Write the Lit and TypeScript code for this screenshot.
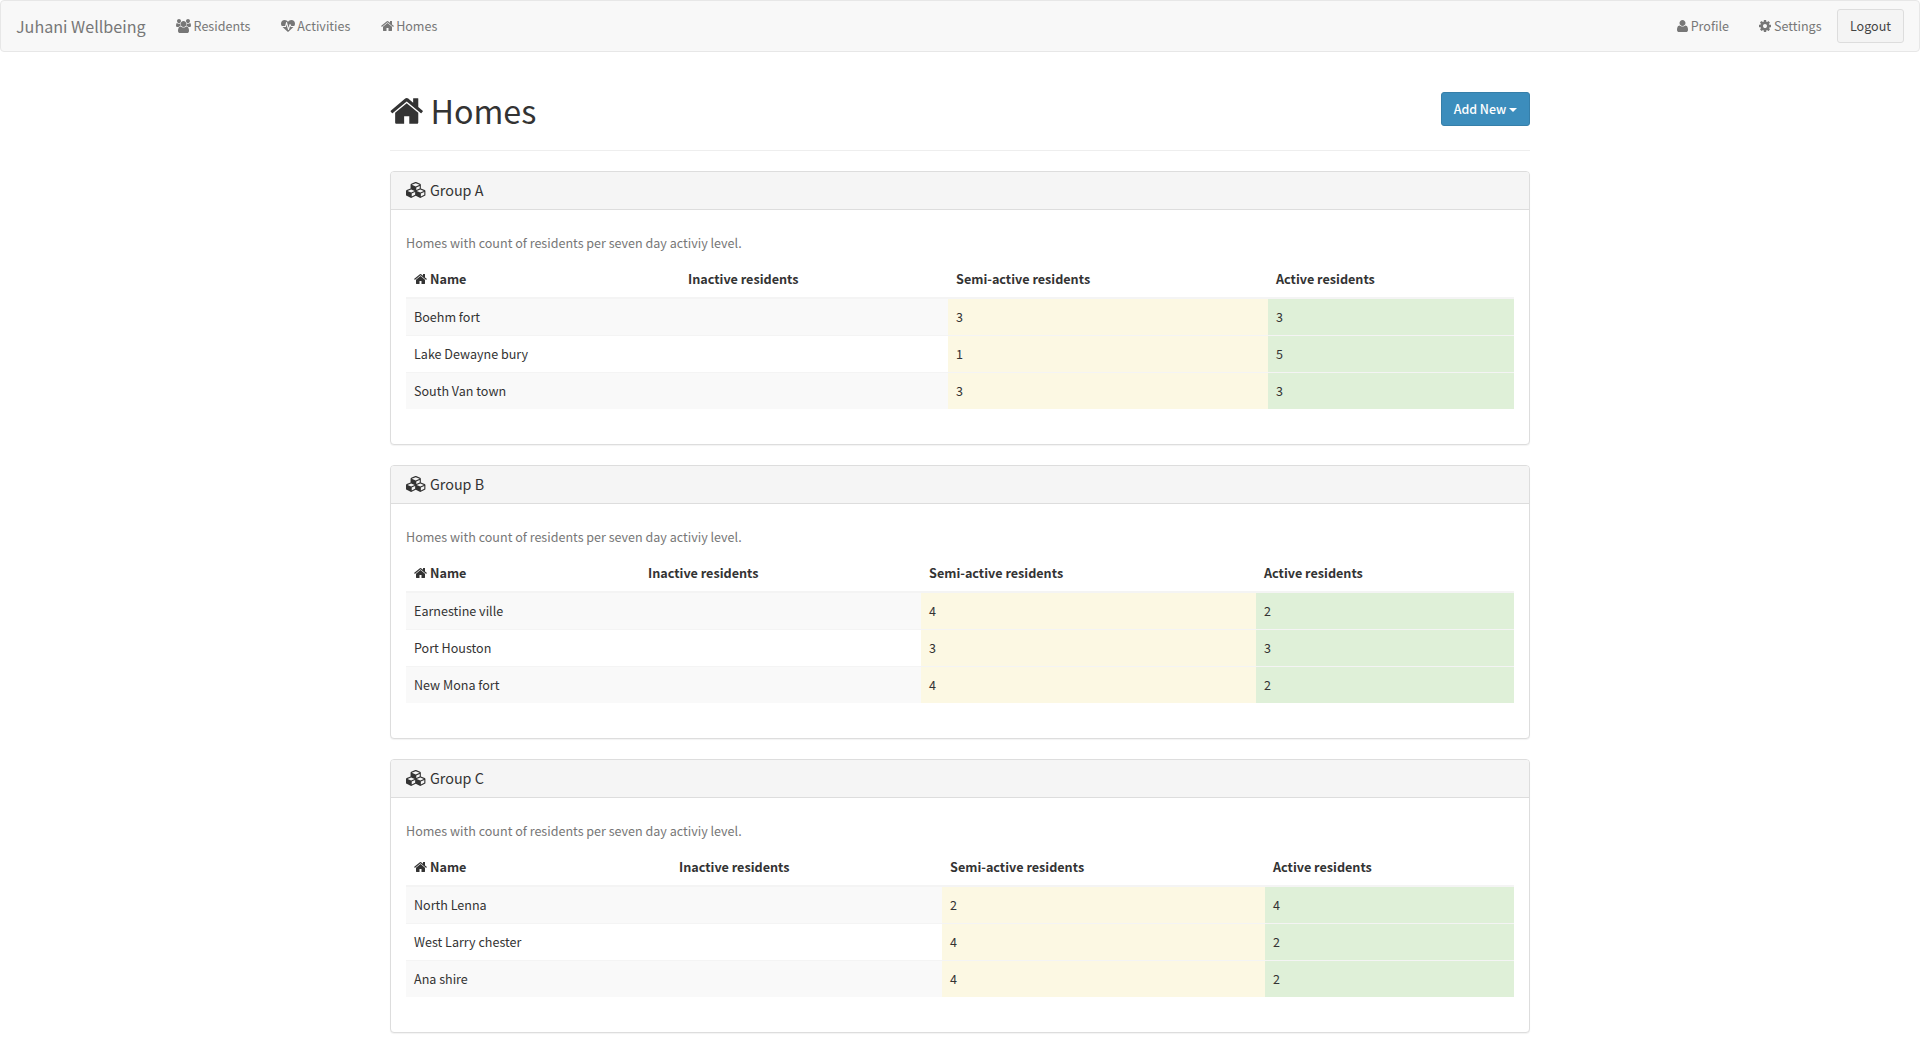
import { LitElement, html, css, svg } from "lit";
import { customElement, property } from "lit/decorators.js";

/* Glyph outlines on a 1792-unit em, y axis pointing up, baseline at 0. */
const GLYPHS: Record<string, { w: number; d: string }> = {
  home: {
    w: 1664,
    d: "M1408 544v-480q0 -26 -19 -45t-45 -19h-384v384h-256v-384h-384q-26 0 -45 19t-19 45v480q0 1 0.5 3t0.5 3l575 474l575 -474q1 -2 1 -6zM1631 613l-62 -74q-8 -9 -21 -11h-3q-13 0 -21 7l-692 577l-692 -577q-12 -8 -24 -7q-13 2 -21 11l-62 74q-8 10 -7 23.5t11 21.5l719 599q32 26 76 26t76 -26l244 -204v195q0 14 9 23t23 9h192q14 0 23 -9t9 -23v-408l219 -182q10 -8 11 -21.5t-7 -23.5z",
  },
  user: {
    w: 1408,
    d: "M1408 131q0 -120 -73 -189.5t-194 -69.5h-874q-121 0 -194 69.5t-73 189.5q0 53 3.5 103.5t14 109t26.5 108.5t43 97.5t62 81t85.5 53.5t111.5 20q9 0 42 -21.5t74.5 -48t108 -48t133.5 -21.5t133.5 21.5t108 48t74.5 48t42 21.5q61 0 111.5 -20t85.5 -53.5t62 -81t43 -97.5t26.5 -108.5t14 -109t3.5 -103.5zM1088 1024q0 -159 -112.5 -271.5t-271.5 -112.5t-271.5 112.5t-112.5 271.5t112.5 271.5t271.5 112.5t271.5 -112.5t112.5 -271.5z",
  },
  users: {
    w: 1920,
    d: "M593 640q-162 -5 -265 -128h-134q-82 0 -138 40.5t-56 118.5q0 353 124 353q6 0 43.5 -21t97.5 -42.5t119 -21.5q67 0 133 23q-5 -37 -5 -66q0 -139 81 -256zM1664 3q0 -120 -73 -189.5t-194 -69.5h-874q-121 0 -194 69.5t-73 189.5q0 53 3.5 103.5t14 109t26.5 108.5t43 97.5t62 81t85.5 53.5t111.5 20q10 0 43 -21.5t73 -48t107 -48t135 -21.5t135 21.5t107 48t73 48t43 21.5q61 0 111.5 -20t85.5 -53.5t62 -81t43 -97.5t26.5 -108.5t14 -109t3.5 -103.5zM640 1280q0 -106 -75 -181t-181 -75t-181 75t-75 181t75 181t181 75t181 -75t75 -181zM1344 896q0 -159 -112.5 -271.5t-271.5 -112.5t-271.5 112.5t-112.5 271.5t112.5 271.5t271.5 112.5t271.5 -112.5t112.5 -271.5zM1920 671q0 -78 -56 -118.5t-138 -40.5h-134q-103 123 -265 128q81 117 81 256q0 29 -5 66q66 -23 133 -23q59 0 119 21.5t97.5 42.5t43.5 21q124 0 124 -353zM1792 1280q0 -106 -75 -181t-181 -75t-181 75t-75 181t75 181t181 75t181 -75t75 -181z",
  },
  heartbeat: {
    w: 1792,
    d: "M1280 512h305q-5 -6 -10 -10.5t-9 -7.5l-3 -4l-623 -600q-18 -18 -44 -18t-44 18l-624 602q-5 2 -21 20h369q22 0 39.5 13.5t22.5 34.5l70 281l190 -667q6 -20 23 -33t39 -13q21 0 38 13t23 33l146 485l56 -112q18 -35 57 -35zM1792 940q0 -145 -103 -300h-369l-111 221q-8 17 -25.5 27t-36.5 8q-45 -5 -56 -46l-129 -430l-196 686q-6 20 -23.5 33t-39.5 13t-39 -13.5t-22 -34.5l-116 -464h-423q-103 155 -103 300q0 220 127 344t351 124q62 0 126.5 -21.5t120 -58t95.5 -68.5t76 -68q36 36 76 68t95.5 68.5t120 58t126.5 21.5q224 0 351 -124t127 -344z",
  },
  cog: {
    w: 1536,
    d: "M1024 640q0 106 -75 181t-181 75t-181 -75t-75 -181t75 -181t181 -75t181 75t75 181zM1536 749v-222q0 -12 -8 -23t-20 -13l-185 -28q-19 -54 -39 -91q35 -50 107 -138q10 -12 10 -25t-9 -23q-27 -37 -99 -108t-94 -71q-12 0 -26 9l-138 108q-44 -23 -91 -38q-16 -136 -29 -186q-7 -28 -36 -28h-222q-14 0 -24.5 8.5t-11.5 21.5l-28 184q-49 16 -90 37l-141 -107q-10 -9 -25 -9q-14 0 -25 11q-126 114 -165 168q-7 10 -7 23q0 12 8 23q15 21 51 66.5t54 70.5q-27 50 -41 99l-183 27q-13 2 -21 12.5t-8 23.5v222q0 12 8 23t19 13l186 28q14 46 39 92q-40 57 -107 138q-10 12 -10 24q0 10 9 23q26 36 98.5 107.5t94.5 71.5q13 0 26 -10l138 -107q44 23 91 38q16 136 29 186q7 28 36 28h222q14 0 24.5 -8.5t11.5 -21.5l28 -184q49 -16 90 -37l142 107q9 9 24 9q13 0 25 -10q129 -119 165 -170q7 -8 7 -22q0 -12 -8 -23q-15 -21 -51 -66.5t-54 -70.5q26 -50 41 -98l183 -28q13 -2 21 -12.5t8 -23.5z",
  },
  cubes: {
    w: 2304,
    d: "M640 -96l384 192v314l-384 -164v-342zM576 358l404 173l-404 173l-404 -173zM1664 -96l384 192v314l-384 -164v-342zM1600 358l404 173l-404 173l-404 -173zM1152 651l384 165v266l-384 -164v-267zM1088 1030l441 189l-441 189l-441 -189zM2176 512v-416q0 -36 -19 -67t-52 -47l-448 -224q-25 -14 -57 -14t-57 14l-448 224q-5 2 -7 4q-2 -2 -7 -4l-448 -224q-25 -14 -57 -14t-57 14l-448 224q-33 16 -52 47t-19 67v416q0 38 21.5 70t56.5 48l434 186v400q0 38 21.5 70t56.5 48l448 192q23 10 50 10t50 -10l448 -192q35 -16 56.5 -48t21.5 -70v-400l434 -186q36 -16 57 -48t21 -70z",
  },
};

const icon = (name: string, size: number) => {
  const g = GLYPHS[name];
  return html`<svg
    class="icon"
    width=${(g.w / 1792) * size}
    height=${size}
    viewBox="0 0 ${g.w} 1792"
    aria-hidden="true"
  >${svg`<path transform="translate(0 1536) scale(1 -1)" d=${g.d}></path>`}</svg>`;
};

const iconStyles = css`
  .icon {
    flex: none;
    display: block;
    fill: currentColor;
    overflow: visible;
  }
`;

interface Home {
  name: string;
  semi: number;
  active: number;
}

interface Group {
  name: string;
  columns: number[];
  homes: Home[];
}

const GROUPS: Group[] = [
  {
    name: "Group A",
    columns: [274, 268, 320, 246],
    homes: [
      { name: "Boehm fort", semi: 3, active: 3 },
      { name: "Lake Dewayne bury", semi: 1, active: 5 },
      { name: "South Van town", semi: 3, active: 3 },
    ],
  },
  {
    name: "Group B",
    columns: [234, 281, 335, 258],
    homes: [
      { name: "Earnestine ville", semi: 4, active: 2 },
      { name: "Port Houston", semi: 3, active: 3 },
      { name: "New Mona fort", semi: 4, active: 2 },
    ],
  },
  {
    name: "Group C",
    columns: [265, 271, 323, 249],
    homes: [
      { name: "North Lenna", semi: 2, active: 4 },
      { name: "West Larry chester", semi: 4, active: 2 },
      { name: "Ana shire", semi: 4, active: 2 },
    ],
  },
];

@customElement("home-group")
export class HomeGroup extends LitElement {
  @property({ attribute: false }) group!: Group;

  static styles = [
    iconStyles,
    css`
      :host {
        display: block;
        box-sizing: border-box;
        height: 274px;
        background: #fff;
        border: 1px solid #ddd;
        border-radius: 4px;
        box-shadow: 0 1px 1px rgba(0, 0, 0, 0.05);
      }
      .heading {
        display: flex;
        align-items: center;
        gap: 3.4px;
        box-sizing: border-box;
        height: 38px;
        padding: 0 15px 1px;
        background: #f5f5f5;
        border-bottom: 1px solid #ddd;
        border-radius: 3px 3px 0 0;
        font-size: 14.33px;
        line-height: 18px;
      }
      .body {
        padding: 23px 15px 0;
      }
      .note {
        margin: 0 0 8px;
        color: #777;
        line-height: 20px;
      }
      .table {
        width: 1108px;
        table-layout: fixed;
        border-spacing: 0;
      }
      .cell {
        padding: 8px;
        height: 20px;
        text-align: left;
        border-top: 1px solid #f4f4f4;
      }
      .head .cell {
        border-top: 0;
        border-bottom: 2px solid #f4f4f4;
        font-size: 12.64px;
        font-weight: 700;
      }
      .row:first-child .cell {
        border-top: 0;
      }
      .row:nth-child(odd) .cell {
        background: #f9f9f9;
      }
      .row .cell.semi {
        background: #fcf8e3;
      }
      .row .cell.active {
        background: #dff0d8;
      }
      .name {
        display: flex;
        align-items: center;
        gap: 3px;
      }
    `,
  ];

  render() {
    const { name, columns, homes } = this.group;
    return html`
      <div class="heading">${icon("cubes", 16)}<span>${name}</span></div>
      <div class="body">
        <p class="note">Homes with count of residents per seven day activiy level.</p>
        <table class="table">
          <colgroup>
            ${columns.map((w) => html`<col style="width:${w}px" />`)}
          </colgroup>
          <thead class="head">
            <tr>
              <th class="cell"><span class="name">${icon("home", 14)}<span>Name</span></span></th>
              <th class="cell">Inactive residents</th>
              <th class="cell">Semi-active residents</th>
              <th class="cell">Active residents</th>
            </tr>
          </thead>
          <tbody>
            ${homes.map(
              (h) => html`<tr class="row">
                <td class="cell">${h.name}</td>
                <td class="cell"></td>
                <td class="cell semi">${h.semi}</td>
                <td class="cell active">${h.active}</td>
              </tr>`
            )}
          </tbody>
        </table>
      </div>
    `;
  }
}

@customElement("app-root")
export class AppRoot extends LitElement {
  static styles = [
    iconStyles,
    css`
      :host {
        display: block;
        min-height: 1053px;
        background: #fff;
        color: #333;
        font-family: "Noto Sans CJK SC", "Source Sans Pro", sans-serif;
        font-size: 12.56px;
        line-height: 20px;
      }
      .navbar {
        box-sizing: border-box;
        display: flex;
        align-items: center;
        height: 52px;
        padding: 0 15px;
        background: #f8f8f8;
        border: 1px solid #e7e7e7;
        border-radius: 4px;
        color: #777;
      }
      .brand {
        margin-right: 15.4px;
        font-size: 16.12px;
      }
      .link {
        display: flex;
        align-items: center;
        gap: 2.6px;
        padding: 0 15px;
      }
      .links {
        display: flex;
        gap: 0.2px;
      }
      .links.end {
        gap: 0.4px;
        margin: 0 0.4px 0 auto;
      }
      .button {
        box-sizing: border-box;
        display: flex;
        align-items: center;
        justify-content: center;
        gap: 3px;
        height: 34px;
        margin: 0;
        padding: 0 12px;
        border: 1px solid #ddd;
        border-radius: 3px;
        background: #f4f4f4;
        color: #444;
        font: inherit;
        white-space: nowrap;
      }
      .button.primary {
        width: 89px;
        background: #3c8dbc;
        border-color: #367fa9;
        color: #fff;
        font-size: 12.4px;
        font-weight: 500;
      }
      .caret {
        margin-top: 2px;
        border-top: 4px solid;
        border-left: 4px solid transparent;
        border-right: 4px solid transparent;
      }
      .container {
        width: 1140px;
        margin: 0 auto;
      }
      .title {
        display: flex;
        justify-content: space-between;
        box-sizing: border-box;
        height: 99px;
        padding-top: 40px;
        border-bottom: 1px solid #eee;
      }
      .heading {
        display: flex;
        align-items: center;
        gap: 7px;
        height: 38px;
        margin: 0;
        font-size: 32.24px;
        font-weight: 400;
        line-height: 36px;
      }
      .heading-label {
        padding-bottom: 2px;
      }
      .groups {
        display: flex;
        flex-direction: column;
        gap: 20px;
        padding-top: 20px;
      }
    `,
  ];

  private link(name: string, label: string) {
    return html`<a class="link">${icon(name, 14)}<span>${label}</span></a>`;
  }

  render() {
    return html`
      <nav class="navbar">
        <span class="brand">Juhani Wellbeing</span>
        <div class="links">
          ${this.link("users", "Residents")}
          ${this.link("heartbeat", "Activities")}
          ${this.link("home", "Homes")}
        </div>
        <div class="links end">
          ${this.link("user", "Profile")}
          ${this.link("cog", "Settings")}
        </div>
        <button class="button">Logout</button>
      </nav>
      <main class="container">
        <header class="title">
          <h1 class="heading">${icon("home", 36)}<span class="heading-label">Homes</span></h1>
          <button class="button primary"><span>Add New</span><span class="caret"></span></button>
        </header>
        <section class="groups">
          ${GROUPS.map((g) => html`<home-group .group=${g}></home-group>`)}
        </section>
      </main>
    `;
  }
}
